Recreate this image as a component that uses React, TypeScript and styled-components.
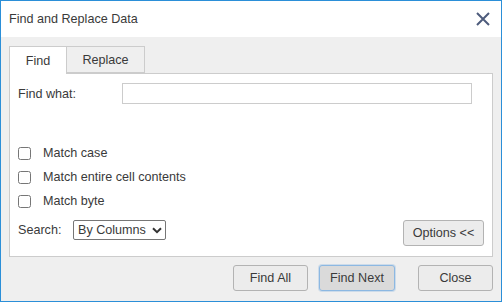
import React from "react";
import styled, { createGlobalStyle } from "styled-components";

const Global = createGlobalStyle`
  html, body { margin: 0; padding: 0; background: #ffffff; }
  body { font-family: "Liberation Sans", Arial, sans-serif; font-size: 12.6px; color: #3a3a3a; }
  * { box-sizing: border-box; }
`;

const Dialog = styled.div`
  width: 502px;
  height: 302px;
  border: 1px solid #2b8fd8;
  display: flex;
  flex-direction: column;
  background: #efefef;
`;

const TitleBar = styled.div`
  height: 36px;
  flex: none;
  background: #ffffff;
  display: flex;
  align-items: center;
  justify-content: space-between;
  padding: 0 10px 0 8px;
`;

const Title = styled.span`
  font-size: 12.6px;
  color: #3a3a3a;
`;

const CloseIcon = styled.button`
  width: 16px;
  height: 16px;
  padding: 0;
  border: none;
  background: transparent;
  display: flex;
  align-items: center;
  justify-content: center;
`;

const Body = styled.div`
  flex: 1;
  display: flex;
  flex-direction: column;
  padding: 9px 8px 10px 8px;
`;

const Tabs = styled.div`
  display: flex;
  height: 27px;
  flex: none;
`;

const Tab = styled.div<{ $active?: boolean; $w: number }>`
  width: ${(p) => p.$w}px;
  height: ${(p) => (p.$active ? 28 : 27)}px;
  margin-left: ${(p) => (p.$active ? 0 : -1)}px;
  border: 1px solid #cccccc;
  border-bottom: ${(p) => (p.$active ? "none" : "1px solid #cccccc")};
  background: ${(p) => (p.$active ? "#ffffff" : "#efefef")};
  display: flex;
  align-items: center;
  justify-content: center;
  padding-top: 1px;
  font-size: 12.6px;
  color: #3a3a3a;
  position: relative;
  z-index: ${(p) => (p.$active ? 1 : 0)};
`;

const Panel = styled.div`
  flex: 1;
  border: 1px solid #cccccc;
  background: #ffffff;
  display: flex;
  flex-direction: column;
  padding: 9px 8px 10px 8px;
`;

const FindRow = styled.div`
  display: flex;
  align-items: center;
  height: 21px;
`;

const FieldLabel = styled.label<{ $w: number }>`
  width: ${(p) => p.$w}px;
  flex: none;
  font-size: 12.6px;
  color: #3a3a3a;
`;

const TextInput = styled.input`
  width: 350px;
  height: 21px;
  border: 1px solid #cccccc;
  border-radius: 0;
  padding: 0 4px;
  font: inherit;
  outline: none;
`;

const Options = styled.div`
  margin-top: 37px;
  display: flex;
  flex-direction: column;
`;

const CheckRow = styled.label`
  height: 24px;
  display: flex;
  align-items: center;
  font-size: 12.6px;
  color: #3a3a3a;
`;

const Check = styled.input`
  width: 13px;
  height: 13px;
  margin: 0 12px 0 0;
`;

const BottomRow = styled.div`
  margin-top: auto;
  display: flex;
  align-items: flex-start;
  justify-content: space-between;
`;

const SearchGroup = styled.div`
  display: flex;
  align-items: center;
  height: 20px;
`;

const SelectBox = styled.div`
  width: 93px;
  height: 20px;
  border: 1px solid #767676;
  border-radius: 2px;
  background: #ffffff;
  display: flex;
  align-items: center;
  padding: 0 3px 0 0;
`;

const Select = styled.select`
  appearance: none;
  -webkit-appearance: none;
  flex: 1;
  min-width: 0;
  height: 18px;
  border: none;
  background: transparent;
  font-family: "Liberation Sans", Arial, sans-serif;
  font-size: 12.6px;
  color: #3a3a3a;
  padding: 0 0 0 4px;
  outline: none;
`;

const Button = styled.button<{ $w: number; $focus?: boolean; $mr?: number }>`
  width: ${(p) => p.$w}px;
  height: 26px;
  margin-right: ${(p) => p.$mr ?? 0}px;
  border: 1px solid ${(p) => (p.$focus ? "#8cb8e2" : "#b3b3b3")};
  border-radius: 3px;
  background: ${(p) => (p.$focus ? "#dadada" : "#ececec")};
  font-family: "Liberation Sans", Arial, sans-serif;
  font-size: 12.6px;
  color: #3a3a3a;
  padding: 0;
  box-shadow: ${(p) => (p.$focus ? "0 0 0 1px rgba(140,184,226,0.35)" : "none")};
`;

const ButtonRow = styled.div`
  margin-top: 8px;
  display: flex;
  justify-content: flex-end;
  flex: none;
`;

export default function App() {
  return (
    <>
      <Global />
      <Dialog>
        <TitleBar>
          <Title>Find and Replace Data</Title>
          <CloseIcon aria-label="Close">
            <svg width="14" height="14" viewBox="0 0 14 14">
              <path d="M1 1 L13 13 M13 1 L1 13" stroke="#4e5c7c" strokeWidth="2" fill="none" />
            </svg>
          </CloseIcon>
        </TitleBar>
        <Body>
          <Tabs>
            <Tab $active $w={58}>Find</Tab>
            <Tab $w={79}>Replace</Tab>
          </Tabs>
          <Panel>
            <FindRow>
              <FieldLabel $w={104}>Find what:</FieldLabel>
              <TextInput type="text" />
            </FindRow>
            <Options>
              <CheckRow>
                <Check type="checkbox" />
                Match case
              </CheckRow>
              <CheckRow>
                <Check type="checkbox" />
                Match entire cell contents
              </CheckRow>
              <CheckRow>
                <Check type="checkbox" />
                Match byte
              </CheckRow>
            </Options>
            <BottomRow>
              <SearchGroup>
                <FieldLabel $w={55}>Search:</FieldLabel>
                <SelectBox>
                  <Select defaultValue="cols">
                    <option value="cols">By Columns</option>
                    <option value="rows">By Rows</option>
                  </Select>
                  <svg width="10" height="7" viewBox="0 0 10 7">
                    <path d="M1 1.2 L5 5.2 L9 1.2" stroke="#333333" strokeWidth="2" fill="none" />
                  </svg>
                </SelectBox>
              </SearchGroup>
              <Button $w={81}>Options &lt;&lt;</Button>
            </BottomRow>
          </Panel>
          <ButtonRow>
            <Button $w={75} $mr={11}>Find All</Button>
            <Button $w={76} $mr={23} $focus>Find Next</Button>
            <Button $w={75}>Close</Button>
          </ButtonRow>
        </Body>
      </Dialog>
    </>
  );
}
